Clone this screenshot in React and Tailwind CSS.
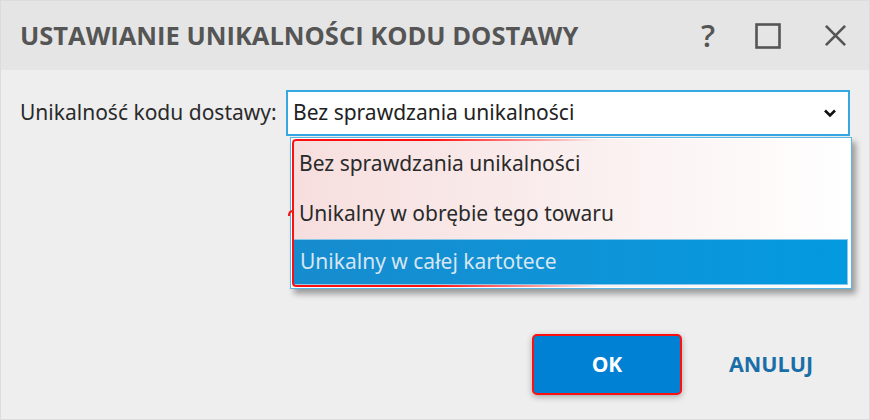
import React from "react";

const f = { fontFamily: '"Noto Sans", sans-serif' };

export default function App() {
  return (
    <div className="w-[870px] h-[420px] bg-[#eeeeee] flex flex-col border border-[#dcdcdc] overflow-hidden" style={{ fontFamily: '"Open Sans", "Noto Sans", sans-serif' }}>
      <div className="h-[69px] bg-[#e5e5e5] flex items-center pl-[19px] pr-[22px] shrink-0">
        <div className="text-[25.5px] font-bold text-[#555555] flex-1">USTAWIANIE UNIKALNOŚCI KODU DOSTAWY</div>
        <div className="flex items-center text-[#555555]">
          <span className="text-[31px] font-semibold leading-none mr-[40px]">?</span>
          <svg width="26" height="26" viewBox="0 0 26 26" className="mr-[43px]"><rect x="1.5" y="1.5" width="23" height="23" fill="none" stroke="#555" strokeWidth="2.6" /></svg>
          <svg width="23" height="23" viewBox="0 0 24 24"><path d="M2 2 L22 22 M22 2 L2 22" stroke="#555" strokeWidth="2.8" /></svg>
        </div>
      </div>
      <div className="relative flex-1 px-[19px] pt-[20px]">
        <div className="flex items-center">
          <div className="w-[267px] text-[21px] text-[#2a2a2a]" style={f}>Unikalność kodu dostawy:</div>
          <div className="relative w-[566px] h-[46px] bg-white border-2 border-[#35a8e2] flex items-center pl-[5px] pr-[11px]">
            <span className="flex-1 text-[21px] text-[#222]" style={f}>Bez sprawdzania unikalności</span>
            <svg width="14" height="10" viewBox="0 0 14 10"><path d="M2 2.5 L7 7.5 L12 2.5" fill="none" stroke="#111" strokeWidth="2.6" /></svg>
            <div className="absolute left-[2px] top-[45px] w-[562px] h-[152px] border border-[#5ab8e8] bg-white shadow-[4px_5px_6px_rgba(0,0,0,0.35)] flex flex-col p-[1px]">
              <div className="relative flex-1 flex flex-col bg-gradient-to-r from-[#f7dede] via-[#faeeee] to-white">
                <div className="absolute inset-0 rounded-[4px] border-2 border-[#ff1010] pointer-events-none" style={{ maskImage: 'linear-gradient(to right, black 0%, black 25%, transparent 55%)', WebkitMaskImage: 'linear-gradient(to right, black 0%, black 25%, transparent 55%)' }} />
                <div className="absolute left-[-4px] top-[71px] w-[5px] h-[6px] border-l-2 border-t-2 border-[#ff1010] rounded-tl-[5px]" />
                <div className="h-[50px] flex items-center pl-[7px] text-[21px] text-[#2a2a2a]" style={f}>Bez sprawdzania unikalności</div>
                <div className="h-[50px] flex items-center pl-[7px] text-[21px] text-[#2a2a2a]" style={f}>Unikalny w obrębie tego towaru</div>
                <div className="h-[46px] flex items-center pl-[7px] text-[21px] text-[#d6e6f2] bg-gradient-to-r from-[#168cce] to-[#039ae0] border border-[#8cc8ea] mr-[2px]" style={f}>Unikalny w całej kartotece</div>
              </div>
            </div>
          </div>
        </div>
        <div className="absolute left-[531px] top-[264px] flex items-center">
          <button className="w-[150px] h-[61px] rounded-[5px] bg-[#0081d3] border-2 border-[#ff1010] text-white text-[21px] font-bold shadow-[0_2px_6px_rgba(0,0,0,0.3)]">OK</button>
          <span className="ml-[47px] text-[21.5px] font-bold text-[#1a6ea8]">ANULUJ</span>
        </div>
      </div>
    </div>
  );
}
